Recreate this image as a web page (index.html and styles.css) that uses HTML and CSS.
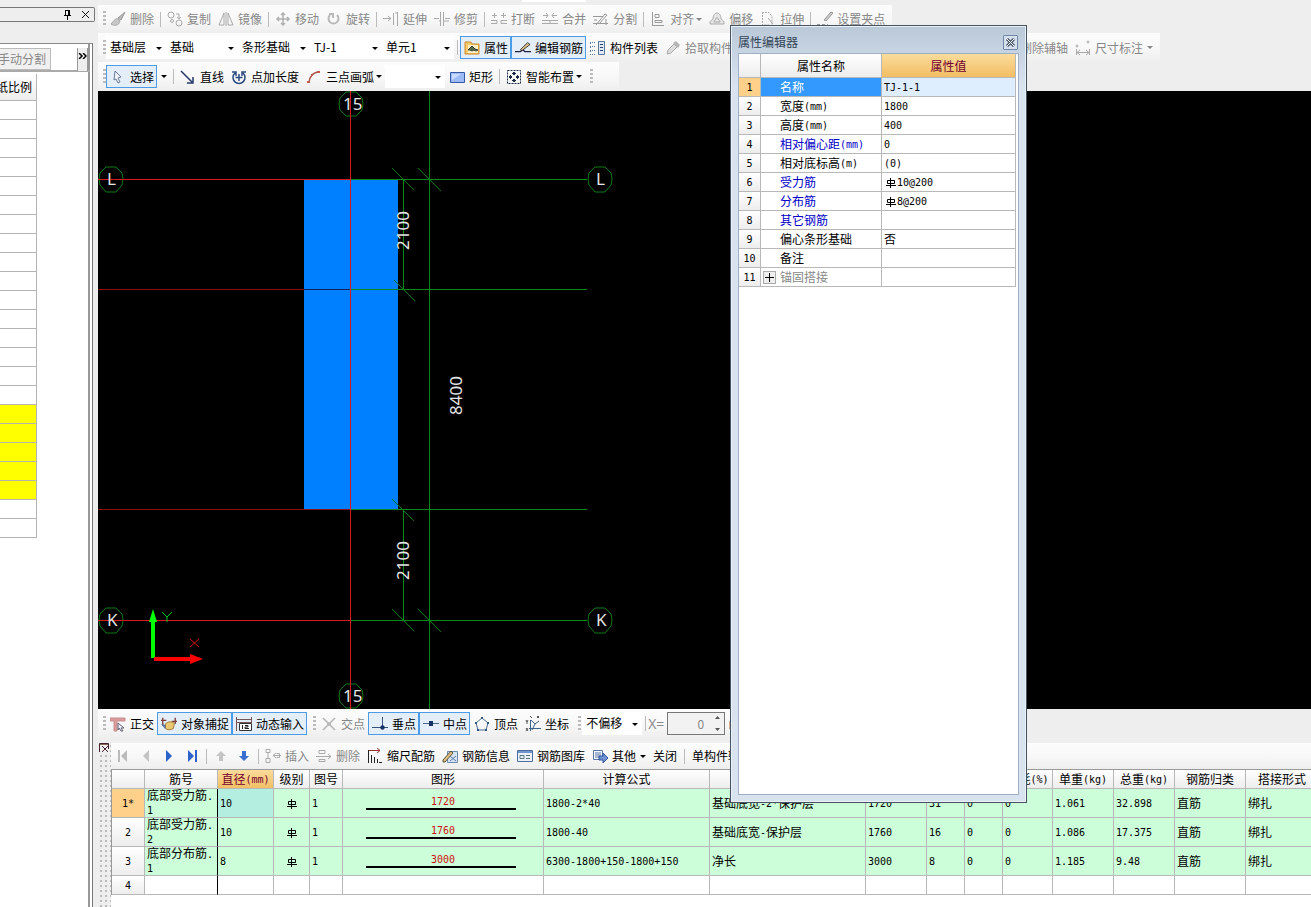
FILE: index.html
```html
<!DOCTYPE html>
<html lang="zh-CN">
<head>
<meta charset="utf-8">
<title>属性编辑器</title>
<link rel="stylesheet" href="styles.css">
</head>
<body>
<svg class="sprite" aria-hidden="true">
  <symbol id="i-brush" viewBox="0 0 16 16"><path d="M15 1 8 7l3 2z" fill="#bbb" stroke="#999"/><path d="M8 8c-3-1-4 2-7 5 3 2 8 2 9-3z" fill="#c8c8c8" stroke="#aaa"/></symbol>
  <symbol id="i-copy" viewBox="0 0 16 16" fill="none" stroke="#aaa"><circle cx="4" cy="4" r="3"/><circle cx="12" cy="12" r="3"/><circle cx="5" cy="10" r="1.5"/><path d="M9 3h3v4M10 6l2 2 2-2"/></symbol>
  <symbol id="i-mirror" viewBox="0 0 16 16" fill="none" stroke="#aaa"><path d="M6 2v12H1zM10 2v12h5zM8 1v14"/></symbol>
  <symbol id="i-move" viewBox="0 0 16 16" fill="none" stroke="#b0b0b0" stroke-width="1.5"><path d="M8 2v12M2 8h12M6 4l2-2 2 2M6 12l2 2 2-2M4 6 2 8l2 2M12 6l2 2-2 2"/></symbol>
  <symbol id="i-rotate" viewBox="0 0 16 16" fill="none" stroke="#b8b8b8" stroke-width="2"><path d="M4 4a5 5 0 1 0 7 0"/><path d="M3 3h4v4"/></symbol>
  <symbol id="i-extend" viewBox="0 0 16 16" fill="none" stroke="#aaa"><path d="M0 7.500h8M5 5l3 2.500L5 10M10.500 2v12M14.500 1v14M12 2h3"/></symbol>
  <symbol id="i-trim" viewBox="0 0 16 16" fill="none" stroke="#aaa"><path d="M0 7.500h5M11 7.500h5M6.500 1v14M9.500 1v14M5 10h1M10 10h5"/></symbol>
  <symbol id="i-break" viewBox="0 0 16 16" fill="none" stroke="#aaa"><path d="M1 4.500h5M10 4.500h5M3.500 2v5M12.500 2v5M0 9.500h6v3H0M16 9.500h-6v3h6"/></symbol>
  <symbol id="i-merge" viewBox="0 0 16 16" fill="none" stroke="#aaa"><path d="M1 4.500h5M10 4.500h5M4 2l2 2.500L4 7M12 2l-2 2.500L12 7M0 9.500h16M0 12.500h16M8 10v3"/></symbol>
  <symbol id="i-split" viewBox="0 0 16 16" fill="none" stroke="#999"><path d="M0 5.500h10M0 12.500h15M3 14l9-11 2 1-8 9M1 9h3M13 8v6"/></symbol>
  <symbol id="i-align" viewBox="0 0 16 16" fill="none" stroke="#999"><path d="M2.500 1v14M2 14.500h12M5 3.500h4v3H5zM5 9.500h7v2H5z"/></symbol>
  <symbol id="i-offset" viewBox="0 0 16 16" fill="#e6e6e6" stroke="#aaa"><path d="M1 13c0-4 1-3 3-5 0-8 8-8 8 0 2 2 3 1 3 5z"/><path d="M5 11c0-2 1-1 2-3 0-2 2-2 2 0 1 2 2 1 2 3z"/></symbol>
  <symbol id="i-stretch" viewBox="0 0 16 16" fill="none" stroke="#aaa"><path d="M2 1.500h7l3 4v9M2.500 1v13H9" stroke-dasharray="2 1"/><path d="m8 7 5 6"/></symbol>
  <symbol id="i-grip" viewBox="0 0 16 16" fill="none" stroke="#999"><path d="m14 1-7 8 2 1 7-8z" fill="#ccc"/><path d="M0 13.500h11" stroke-dasharray="3 2"/></symbol>
  <symbol id="i-props" viewBox="0 0 16 16"><path d="M1 2h6l1 2h7v10H1z" fill="#f7c96a" stroke="#c8862a"/><path d="M4 5h10v8H4z" fill="#fff1c4"/><path d="m4 10 4-4 3 3 3 1-2 1-2-1-2 1-2-1z" fill="#5a6a48" stroke="#34443a"/></symbol>
  <symbol id="i-pen" viewBox="0 0 18 16"><path d="M0 12h6l3-2 2 2h7" fill="none" stroke="#224" stroke-width="1.500"/><path d="m6 10 8-8 3 2-9 7z" fill="#d7b98a" stroke="#333"/></symbol>
  <symbol id="i-list" viewBox="0 0 16 16" fill="none" stroke="#58759b"><path d="M2 2.500h4M2 6.500h4M2 10.500h4M2 14.500h4" stroke-dasharray="1 1"/><path d="M.500 2v13" stroke-dasharray="2 2"/><path d="M8.500 1.500h6v13h-6z" fill="#dfe9f6"/><path d="M10 4.500h3M10 7.500h3M10 10.500h3" stroke="#2c476f"/></symbol>
  <symbol id="i-dropper" viewBox="0 0 16 16"><path d="m2 14 1-4 6-6 3 3-6 6z" fill="#ddd" stroke="#aaa"/><path d="m8 3 3-2 4 4-2 3z" fill="#b5b5b5"/></symbol>
  <symbol id="i-dim" viewBox="0 0 16 16" fill="none" stroke="#aaa"><path d="M1.500 9v6M14.500 9v6M2 12.500h12M5 10l-3 2.500L5 15M11 10l3 2.500L11 15"/><circle cx="13" cy="2" r="1"/><circle cx="2" cy="6" r="1"/></symbol>
  <symbol id="i-select" viewBox="0 0 16 16"><path d="m5 2 6 6-3 1 2 4-2 1-2-4-2 1z" fill="#eef3fa" stroke="#6a7a9a"/></symbol>
  <symbol id="i-line" viewBox="0 0 16 16" fill="none" stroke="#25396b" stroke-width="1.500"><path d="m1 2 11 11M13 8v6H7"/></symbol>
  <symbol id="i-pluslen" viewBox="0 0 16 16" fill="none" stroke="#2b4a80" stroke-width="1.500"><path d="M4 4a6 6 0 1 0 8 0M1 3h4v4M8 5v7M4.500 8.500h7M15 3h-4v4"/></symbol>
  <symbol id="i-arc" viewBox="0 0 16 16"><path d="M3 14C3 8 7 3 13 3" fill="none" stroke="#a5504a" stroke-width="1.500"/><path d="M1 12h3v2H1zM11 2h3v2h-3zM5 5h2v2H5z" fill="#c25a50"/></symbol>
  <symbol id="i-rect" viewBox="0 0 16 16"><path d="M1.500 3.500h14v10h-14z" fill="#9dbcf6" stroke="#3659a8"/><path d="M3 5h9L3 11z" fill="#c9dbff"/></symbol>
  <symbol id="i-smart" viewBox="0 0 16 16" fill="none" stroke="#1c2a44"><path d="M1.500 1.500h13v13h-13z" stroke-dasharray="2 1"/><path d="M8 3v3M8 10v3M3 8h3M10 8h3" stroke-width="2"/><path d="m6 5 2-2 2 2M6 11l2 2 2-2M5 6 3 8l2 2M11 6l2 2-2 2"/></symbol>
  <symbol id="i-ortho" viewBox="0 0 16 16"><path d="M0 2h15v3H7v10H4V5H0z" fill="#dc9a9a" stroke="#c89090"/><path d="m8 7 6 5h-3l2 3h-2l-2-3-1 2z" fill="#eef" stroke="#667"/></symbol>
  <symbol id="i-snap" viewBox="0 0 18 16"><path d="M2 1v9M0 4h6M16 1v7M12 5h6" stroke="#7d3b36" stroke-width="1.500" fill="none"/><path d="M5 8c2-3 8-3 10-1l-1 6c-3 2-7 2-9 0z" fill="#ecc873" stroke="#96702c"/><path d="m0 8 5 1v5z" fill="#58739b"/></symbol>
  <symbol id="i-dyn" viewBox="0 0 16 16"><path d="M.500 1v14M15.500 1v6M1 3.500h14M1 6.500h14" stroke="#755" fill="none"/><path d="M3.500 7.500h12v7h-12z" fill="#fff" stroke="#333"/><path d="M6.500 9v4M9 9.500h3v1.500H9v1.500h4" stroke="#222" fill="none"/></symbol>
  <symbol id="i-cross" viewBox="0 0 16 16"><path d="M2 2l12 12M14 2 2 14" stroke="#b5b5b5" stroke-width="1.500"/><path d="M6 6h4v4H6z" fill="#bbb"/></symbol>
  <symbol id="i-perp" viewBox="0 0 16 16"><path d="M0 11.500h16M10.500 1v11" stroke="#36527e"/><circle cx="10.500" cy="11.500" r="2.200" fill="#153266"/></symbol>
  <symbol id="i-mid" viewBox="0 0 16 16"><path d="M0 7.500h16" stroke="#49688e"/><path d="M6 5h4v5H6z" fill="#153266"/></symbol>
  <symbol id="i-penta" viewBox="0 0 16 16"><path d="m8 2 6 5-2 7H4L2 7z" fill="none" stroke="#4a6c91"/><path d="M7 1h2v2H7zM1 6h2v2H1zM13 6h2v2h-2zM3 13h2v2H3zM11 13h2v2h-2z" fill="#305680"/></symbol>
  <symbol id="i-coord" viewBox="0 0 16 16" fill="none" stroke="#3c638c"><path d="M5.500 4v11M4 12.500h12M6 4l4 4 4-3M10 8l-3 6"/><path d="M1 4l1 2 1-2M2 6v2M1 12l2 3M3 12l-2 3M5 0l2 2M12 0l2 2M14 0l-2 2" stroke="#555"/></symbol>
  <symbol id="i-insert" viewBox="0 0 16 16" fill="none" stroke="#aaa"><path d="M1 1.500h4v3H1zM1 10.500h4v4H1zM3 5v5M16 7.500H8M11 5 8 7.500 11 10M11.500 5.500h3v4h-3"/></symbol>
  <symbol id="i-remove" viewBox="0 0 16 16" fill="none" stroke="#aaa"><path d="M3 2.500h6v3H3zM3 11.500h6v2H3zM0 8.500h15M12 6l3 2.500L12 11"/></symbol>
  <symbol id="i-scale" viewBox="0 0 16 16" fill="none" stroke="#222"><path d="M1.500 2v13M4.500 7v8M7.500 9v6M10.500 11v4M12 14.500h3"/><path d="M2 2.500h11M10 0l3 2.500L10 5" stroke="#9b3333"/></symbol>
  <symbol id="i-info" viewBox="0 0 16 16"><path d="M5.500 3.500h10v11h-10z" fill="#d7e4f5" stroke="#6d89ad"/><path d="m1 12 8-9 2 2-8 9H1z" fill="#e4bd84" stroke="#553"/><path d="m8 13 6-5M8 8l6 5" stroke="#577aa8"/></symbol>
  <symbol id="i-lib" viewBox="0 0 16 16"><path d="M.500 2.500h15v11H.500z" fill="#eaf1fb" stroke="#4c6d9d"/><path d="M1 3h14v2H1z" fill="#6f95ca"/><path d="M3 7.500h4v3H3zM9 7.500h4M9 10.500h4" fill="none" stroke="#577"/></symbol>
  <symbol id="i-other" viewBox="0 0 16 16"><path d="M1.500 2.500h9v9h-9z" fill="#f3f7ff" stroke="#5877a4"/><path d="M3 5h6M3 7h6M3 9h4" stroke="#5877a4"/><path d="M7 8h4V5l5 5-5 5v-3H7z" fill="#6f92d2" stroke="#34569c"/></symbol>
  <symbol id="i-rebar" viewBox="0 0 10 10"><path d="M1.500 2.500h7v3h-7zM4.500 0v10M0 7.500h10" fill="none" stroke="#000"/></symbol>
</svg>

<div class="app">
  <aside class="side">
    <header class="side-title">
      <svg width="9" height="11" viewBox="0 0 9 11" fill="none" stroke="#000"><path d="M2.500 1v5M1 6.500h7M4.500 7v4M2 1.500h4"/><path d="M6 1v5" stroke-width="2"/></svg>
      <svg width="9" height="9" viewBox="0 0 9 9" stroke="#111"><path d="m1 1 7 7M8 1 1 8"/></svg>
    </header>
    <div class="side-body">
      <div class="side-tools"><button class="split" type="button">手动分割</button><button class="more" type="button" aria-label="更多"><svg width="9" height="6" viewBox="0 0 9 6" fill="none" stroke="#000" stroke-width="1.500"><path d="m1 0 3 3-3 3M5 0l3 3-3 3"/></svg></button></div>
      <table class="scale-table">
        <thead><tr><th><span>图纸比例</span></th></tr></thead>
        <tbody>
          <tr><td></td></tr><tr><td></td></tr><tr><td></td></tr><tr><td></td></tr><tr><td></td></tr><tr><td></td></tr><tr><td></td></tr><tr><td></td></tr>
          <tr><td></td></tr><tr><td></td></tr><tr><td></td></tr><tr><td></td></tr><tr><td></td></tr><tr><td></td></tr><tr><td></td></tr><tr><td></td></tr>
          <tr class="hot"><td></td></tr><tr class="hot"><td></td></tr><tr class="hot"><td></td></tr><tr class="hot"><td></td></tr><tr class="hot"><td></td></tr>
          <tr><td></td></tr><tr><td></td></tr>
        </tbody>
      </table>
    </div>
  </aside>

  <main class="main">
    <div class="bars">
      <div class="top-edge"></div>
      <div class="bar off">
        <i class="grip"></i>
        <button class="tool" type="button"><svg><use href="#i-brush"/></svg>删除</button><i class="sep"></i>
        <button class="tool" type="button"><svg><use href="#i-copy"/></svg>复制</button>
        <button class="tool" type="button"><svg><use href="#i-mirror"/></svg>镜像</button><i class="sep"></i>
        <button class="tool" type="button"><svg><use href="#i-move"/></svg>移动</button>
        <button class="tool" type="button"><svg><use href="#i-rotate"/></svg>旋转</button><i class="sep"></i>
        <button class="tool" type="button"><svg><use href="#i-extend"/></svg>延伸</button>
        <button class="tool" type="button"><svg><use href="#i-trim"/></svg>修剪</button><i class="sep"></i>
        <button class="tool" type="button"><svg><use href="#i-break"/></svg>打断</button>
        <button class="tool" type="button"><svg><use href="#i-merge"/></svg>合并</button>
        <button class="tool" type="button"><svg><use href="#i-split"/></svg>分割</button><i class="sep"></i>
        <button class="tool" type="button"><svg><use href="#i-align"/></svg>对齐<i class="arrow"></i></button>
        <button class="tool" type="button"><svg><use href="#i-offset"/></svg>偏移</button>
        <button class="tool" type="button"><svg><use href="#i-stretch"/></svg>拉伸</button><i class="sep"></i>
        <button class="tool" type="button"><svg><use href="#i-grip"/></svg>设置夹点</button>
      </div>
      <div class="bar">
        <i class="grip"></i>
        <span class="combo short"><select aria-label="楼层"><option>基础层</option></select></span>
        <span class="combo"><select aria-label="构件类别"><option>基础</option></select></span>
        <span class="combo"><select aria-label="构件类型"><option>条形基础</option></select></span>
        <span class="combo"><select aria-label="构件"><option>TJ-1</option></select></span>
        <span class="combo"><select aria-label="单元"><option>单元1</option></select></span><i class="sep"></i>
        <button class="tool on" type="button"><svg><use href="#i-props"/></svg>属性</button>
        <button class="tool on" type="button"><svg><use href="#i-pen"/></svg>编辑钢筋</button>
        <button class="tool" type="button"><svg><use href="#i-list"/></svg>构件列表</button>
        <button class="tool dim" type="button"><svg><use href="#i-dropper"/></svg>拾取构件</button>
        <span class="axis-tools">
          <button class="tool dim" type="button"><svg><use href="#i-line"/></svg>删除辅轴</button>
          <button class="tool dim" type="button"><svg><use href="#i-dim"/></svg>尺寸标注<i class="arrow far"></i></button>
        </span>
      </div>
      <div class="bar">
        <i class="grip"></i>
        <button class="tool on" type="button"><svg><use href="#i-select"/></svg>选择</button><button class="drop" type="button" aria-label="选择方式"><i class="arrow"></i></button><i class="sep"></i>
        <button class="tool" type="button"><svg><use href="#i-line"/></svg>直线</button>
        <button class="tool" type="button"><svg><use href="#i-pluslen"/></svg>点加长度</button>
        <button class="tool" type="button"><svg><use href="#i-arc"/></svg>三点画弧<i class="arrow"></i></button>
        <span class="combo short"><select aria-label="弧半径"><option></option></select></span>
        <button class="tool" type="button"><svg><use href="#i-rect"/></svg>矩形</button><i class="sep"></i>
        <button class="tool" type="button"><svg><use href="#i-smart"/></svg>智能布置<i class="arrow"></i></button>
        <i class="grip"></i><i class="tail"></i>
      </div>
    </div>

    <div class="canvas">
      <svg class="drawing" role="img" aria-label="条形基础平面图">
        <g transform="translate(-98 -91)">
          <path class="blue" d="M304 180h94v329h-94z"/>
          <g class="green">
            <path d="M350 179.500h237M350 289.500h237M350 509.500h237M350 620.500h237M429.500 91v618M403.500 180v110M403.500 510v110"/>
            <path class="thin" d="m392 168 22 22M418 168l23 23M394 280l21 21M392 499l22 22M392 609l22 22M418 609l23 23"/>
            <path class="thin" d="M346 92h10l6 6 1 6-1 6-6 6h-10l-6-6-1-6 1-6zM346 684h10l6 6 1 6-1 6-6 6h-10l-6-6-1-6 1-6z"/>
            <path class="thin" d="M106 167h10l6 6 1 6-1 6-6 7h-10l-6-7-1-6 1-6zM595 167h10l6 6 1 6-1 6-6 7h-10l-6-7-1-6 1-6zM106 608h10l6 6 1 6-1 6-6 7h-10l-6-7-1-6 1-6zM595 608h10l6 6 1 6-1 6-6 7h-10l-6-7-1-6 1-6z"/>
          </g>
          <path class="maroon" d="M98 289.500h206M98 509.500h252"/>
          <path class="navy" d="M304 289.500h46"/>
          <path class="red" d="M98 179.500h252M98 620.500h252M350.500 91v618"/>
          <g class="mark">
            <text x="343" y="110">15</text><text x="343" y="702">15</text>
            <text x="107" y="185">L</text><text x="596" y="185">L</text><text x="107" y="626">K</text><text x="596" y="626">K</text>
            <text transform="translate(409 250) rotate(-90)">2100</text>
            <text transform="translate(409 580) rotate(-90)">2100</text>
            <text transform="translate(462 415) rotate(-90)">8400</text>
          </g>
          <path d="M151 658V622h-2l4-13 4 13h-2v36z" fill="#0f0"/>
          <path d="M154 657h36v-3l13 5-13 5v-3h-36z" fill="red"/>
          <path d="m162 612 5 5 5-5M167 617v5" fill="none" stroke="#0c2"/>
          <path d="m190 639 9 8M199 639l-9 8" stroke="#d11"/>
        </g>
      </svg>
    </div>

    <div class="status">
      <div class="bar">
        <i class="grip"></i>
        <button class="tool" type="button"><svg><use href="#i-ortho"/></svg>正交</button>
        <button class="tool on" type="button"><svg><use href="#i-snap"/></svg>对象捕捉</button>
        <button class="tool on" type="button"><svg><use href="#i-dyn"/></svg>动态输入</button>
        <i class="grip mid"></i>
        <button class="tool dim" type="button"><svg><use href="#i-cross"/></svg>交点</button>
        <button class="tool on" type="button"><svg><use href="#i-perp"/></svg>垂点</button>
        <button class="tool on" type="button"><svg><use href="#i-mid"/></svg>中点</button>
        <button class="tool" type="button"><svg><use href="#i-penta"/></svg>顶点</button>
        <button class="tool" type="button"><svg><use href="#i-coord"/></svg>坐标</button>
        <i class="grip mid"></i>
        <span class="combo short"><select aria-label="偏移方式"><option>不偏移</option></select></span><i class="sep"></i>
        <label class="coord" for="dx">X=</label><span class="spin"><input id="dx" type="text" value="0"><svg width="7" height="15" viewBox="0 0 7 15" fill="#555"><path d="m1 3 2.500-3L6 3zM1 12h5l-2.500 3z"/></svg></span><span class="coord">mm</span>
      </div>
    </div>

    <section class="rebar">
      <div class="gutter"><button class="shut" type="button" aria-label="关闭面板"><svg width="10" height="10" viewBox="0 0 10 10" fill="none" stroke="#423"><path d="M.500 9V.500H9.500V6M3 3l6 6M9 3 3 9"/><path d="M1 1.500h8" stroke="#865"/></svg></button></div>
      <div class="rebar-body">
        <div class="bar">
          <button class="nav" type="button" aria-label="首条"><svg viewBox="0 0 12 12" fill="#bbb"><path d="M1 0h2v12H1zM10 0v12L4 6z"/></svg></button>
          <button class="nav" type="button" aria-label="上一条"><svg viewBox="0 0 12 12" fill="#c4c4c4"><path d="M9 0v12L3 6z"/></svg></button>
          <button class="nav" type="button" aria-label="下一条"><svg viewBox="0 0 12 12" fill="#2d62c8"><path d="M3 0v12l6-6z"/></svg></button>
          <button class="nav" type="button" aria-label="末条"><svg viewBox="0 0 12 12" fill="#2d62c8"><path d="M2 0v12l6-6zM9 0h2v12H9z"/></svg></button><i class="sep"></i>
          <button class="nav" type="button" aria-label="上移"><svg viewBox="0 0 12 12" fill="#c4c4c4"><path d="M6 1 1 6h3v5h4V6h3z"/></svg></button>
          <button class="nav" type="button" aria-label="下移"><svg viewBox="0 0 12 12" fill="#3b6ed0"><path d="M6 11 1 6h3V1h4v5h3z"/></svg></button><i class="sep"></i>
          <button class="tool dim" type="button"><svg><use href="#i-insert"/></svg>插入</button>
          <button class="tool dim" type="button"><svg><use href="#i-remove"/></svg>删除</button>
          <button class="tool" type="button"><svg><use href="#i-scale"/></svg>缩尺配筋</button>
          <button class="tool" type="button"><svg><use href="#i-info"/></svg>钢筋信息</button>
          <button class="tool" type="button"><svg><use href="#i-lib"/></svg>钢筋图库</button>
          <button class="tool" type="button"><svg><use href="#i-other"/></svg>其他<i class="arrow far"></i></button>
          <button class="tool" type="button">关闭</button><i class="sep wide"></i>
          <button class="tool" type="button">单构件输入</button>
        </div>
        <div class="grid-wrap">
        <table class="grid">
          <colgroup><col class="w33"><col class="w73"><col class="w56"><col class="w36"><col class="w33"><col class="w201"><col class="w166"><col class="w156"><col class="w61"><col class="w38"><col class="w38"><col class="w50"><col class="w61"><col class="w61"><col class="w71"><col class="w73"></colgroup>
          <thead><tr><th></th><th>筋号</th><th class="act">直径<b>(mm)</b></th><th>级别</th><th>图号</th><th>图形</th><th>计算公式</th><th>公式描述</th><th>长度<b>(mm)</b></th><th>根数</th><th>搭接</th><th>损耗<b>(%)</b></th><th>单重<b>(kg)</b></th><th>总重<b>(kg)</b></th><th>钢筋归类</th><th>搭接形式</th></tr></thead>
          <tbody>
            <tr><th class="cur"><b>1*</b></th><td class="name">底部受力筋<b>.<br>1</b></td><td class="sel"><b>10</b></td><td class="mid"><svg class="bar-sym"><use href="#i-rebar"/></svg></td><td><b>1</b></td><td><span class="shape">1720</span></td><td><b>1800-2*40</b></td><td>基础底宽<b>-2*</b>保护层</td><td><b>1720</b></td><td><b>31</b></td><td><b>0</b></td><td><b>0</b></td><td><b>1.061</b></td><td><b>32.898</b></td><td>直筋</td><td>绑扎</td></tr>
            <tr><th><b>2</b></th><td class="name">底部受力筋<b>.<br>2</b></td><td><b>10</b></td><td class="mid"><svg class="bar-sym"><use href="#i-rebar"/></svg></td><td><b>1</b></td><td><span class="shape">1760</span></td><td><b>1800-40</b></td><td>基础底宽<b>-</b>保护层</td><td><b>1760</b></td><td><b>16</b></td><td><b>0</b></td><td><b>0</b></td><td><b>1.086</b></td><td><b>17.375</b></td><td>直筋</td><td>绑扎</td></tr>
            <tr><th><b>3</b></th><td class="name">底部分布筋<b>.<br>1</b></td><td><b>8</b></td><td class="mid"><svg class="bar-sym"><use href="#i-rebar"/></svg></td><td><b>1</b></td><td><span class="shape">3000</span></td><td><b>6300-1800+150-1800+150</b></td><td>净长</td><td><b>3000</b></td><td><b>8</b></td><td><b>0</b></td><td><b>0</b></td><td><b>1.185</b></td><td><b>9.48</b></td><td>直筋</td><td>绑扎</td></tr>
            <tr class="blank"><th><b>4</b></th><td class="name"></td><td></td><td></td><td></td><td></td><td></td><td></td><td></td><td></td><td></td><td></td><td></td><td></td><td></td><td></td></tr>
          </tbody>
        </table>
        </div>
      </div>
    </section>
  </main>

  <section class="dialog" role="dialog" aria-labelledby="dlg-title">
    <header class="dialog-head"><span id="dlg-title">属性编辑器</span><button class="close" type="button" aria-label="关闭"><svg width="9" height="9" viewBox="0 0 9 9"><path d="m1 1 7 7M8 1 1 8" stroke="#456" stroke-width="3"/><path d="m1 1 7 7M8 1 1 8" stroke="#fff"/></svg></button></header>
    <div class="dialog-body">
      <table class="props">
        <colgroup><col class="w22"><col class="w121"><col></colgroup>
        <thead><tr><th></th><th>属性名称</th><th class="act">属性值</th></tr></thead>
        <tbody>
          <tr class="picked"><th><b>1</b></th><td>名称</td><td><b>TJ-1-1</b></td></tr>
          <tr><th><b>2</b></th><td>宽度<b>(mm)</b></td><td><b>1800</b></td></tr>
          <tr><th><b>3</b></th><td>高度<b>(mm)</b></td><td><b>400</b></td></tr>
          <tr class="key"><th><b>4</b></th><td>相对偏心距<b>(mm)</b></td><td><b>0</b></td></tr>
          <tr><th><b>5</b></th><td>相对底标高<b>(m)</b></td><td><b>(0)</b></td></tr>
          <tr class="key"><th><b>6</b></th><td>受力筋</td><td><svg class="bar-sym"><use href="#i-rebar"/></svg><b>10@200</b></td></tr>
          <tr class="key"><th><b>7</b></th><td>分布筋</td><td><svg class="bar-sym"><use href="#i-rebar"/></svg><b>8@200</b></td></tr>
          <tr class="key"><th><b>8</b></th><td>其它钢筋</td><td></td></tr>
          <tr><th><b>9</b></th><td>偏心条形基础</td><td>否</td></tr>
          <tr><th><b>10</b></th><td>备注</td><td></td></tr>
          <tr class="group"><th><b>11</b></th><td><button class="expand" type="button" aria-label="展开"><svg width="9" height="9" viewBox="0 0 9 9"><path d="M0 4.500h9M4.500 0v9" stroke="#000"/></svg></button>锚固搭接</td><td></td></tr>
        </tbody>
      </table>
    </div>
  </section>
</div>
</body>
</html>
```
FILE: styles.css
```css
* { box-sizing: border-box; }
body { margin: 0; background: #eee; color: #000; font: 12px/16px "Noto Sans CJK SC", sans-serif; }
button, input, select { font: inherit; color: inherit; margin: 0; }
button { padding: 0; border: 0; background: none; }
b { font: 10px/12px "DejaVu Sans Mono", monospace; vertical-align: 1px; }
table { border-collapse: separate; border-spacing: 0; table-layout: fixed; }
.sprite { position: absolute; width: 0; height: 0; }

.app { position: relative; display: flex; height: 100vh; overflow: hidden; }

/* left panel */
.side { flex: none; width: 95px; padding-top: 7px; display: flex; flex-direction: column; }
.side-title { display: flex; align-items: center; justify-content: flex-end; gap: 9px; height: 15px; padding-right: 4px; border: 1px solid #777; border-left: 0; border-radius: 0 2px 2px 0; }
.side-body { flex: 1; width: 93px; margin-top: 21px; background: #fff; border-top: 1px solid #888; border-right: 1px solid #777; box-shadow: inset -2px 0 #fff, inset -4px 0 #999; }
.side-tools { display: flex; align-items: center; justify-content: space-between; height: 28px; padding: 4px 2px 0 0; margin-right: 2px; border-bottom: 2px solid #aaa; }
.split { display: flex; justify-content: flex-end; align-items: center; width: 51px; height: 22px; padding-right: 4px; overflow: hidden; white-space: nowrap; color: #888; background: #f0f0f0; border: 1px solid #bbb; border-left: 0; }
.more { display: flex; align-items: flex-start; justify-content: center; width: 11px; height: 23px; padding-top: 5px; background: #eee; border: 1px solid #999; border-width: 0 1px; }
.scale-table { width: 37px; margin-top: 2px; }
.scale-table th, .scale-table td { height: 19px; padding: 0; border-right: 1px solid #b4b4b4; border-bottom: 1px solid #b4b4b4; }
.scale-table th { height: 27px; background: linear-gradient(#fff, #eee); font-weight: normal; }
.scale-table span { display: flex; justify-content: flex-end; padding-right: 4px; overflow: hidden; white-space: nowrap; }
.scale-table .hot td { background: #ff0; }

/* toolbars */
.main { flex: 1; min-width: 0; display: flex; flex-direction: column; padding-left: 3px; }
.bars { display: flex; flex-direction: column; align-items: flex-start; overflow: hidden; }
.top-edge { width: 64px; height: 2px; margin: 0 0 3px 424px; background: #fff; }
.bar { display: flex; align-items: center; height: 29px; background: linear-gradient(#fcfcfc, #f8f8f8 50%, #eee); white-space: nowrap; }
.bars .bar { padding-right: 4px; }
.bars .off { height: 28px; }
.off, .dim { color: #888; }
.grip { flex: none; width: 3px; height: 16px; margin-left: 5px; background: repeating-linear-gradient(#bbb 0 2px, transparent 2px 4px); }
.mid.grip { margin: 0 1px 0 6px; }
.sep { flex: none; width: 1px; height: 15px; margin: 0 2px 0 3px; background: #bbb; }
.sep.wide { margin: 0 3px 0 4px; }
.tool { flex: none; display: flex; align-items: center; gap: 4px; height: 23px; padding: 0 3px 0 4px; }
.tool svg { width: 16px; height: 16px; }
.tool.on { padding: 0 2px 0 3px; border: 1px solid #4a9be8; background: #e4eef9; }
.arrow { width: 0; margin: 0 0 0 -2px; border: 3px solid transparent; border-top-color: currentColor; border-bottom: 0; }
.arrow.far { margin-left: 0; }
.drop { display: flex; align-items: center; justify-content: center; width: 13px; height: 23px; padding-left: 2px; }
.tail { width: 22px; }
.combo { position: relative; flex: none; width: 72px; height: 23px; background: #fff; }
.combo.short { width: 60px; }
.combo::after { content: ""; position: absolute; right: 4px; top: 11px; border: 3px solid transparent; border-top-color: #000; border-bottom: 0; pointer-events: none; }
.combo select { appearance: none; display: block; width: 100%; height: 22px; padding: 0 10px 0 4px; border: 0; background: none; }
.axis-tools { display: flex; padding-left: 260px; }

/* drawing area */
.canvas { flex: 1; min-height: 0; background: #000; overflow: hidden; }
.drawing { display: block; width: 100%; height: 100%; }
.blue { fill: #007fff; }
.green { fill: none; stroke: #078a18; }
.green .thin { stroke: #0b7a16; }
.maroon { stroke: #8c1010; }
.navy { stroke: #102060; }
.red { stroke: #d81820; }
.mark { fill: #e4e4e4; font: 17px "Noto Sans", sans-serif; }

.status { flex: none; display: flex; height: 34px; }
.coord { color: #888; font: 14px/16px "Open Sans", sans-serif; }
.spin { flex: none; display: flex; align-items: center; width: 58px; height: 23px; margin: 0 3px; padding-right: 3px; border: 1px solid #777; background: #f2f2f2; }
.spin input { flex: 1; min-width: 0; padding: 0 10px 0 0; border: 0; background: none; color: #888; text-align: right; }

/* rebar list */
.rebar { flex: none; display: flex; height: 164px; overflow: hidden; background: #fff; }
.gutter { flex: none; width: 13px; background: radial-gradient(circle at 1px 1px, #bbb 1px, transparent 1px) 2px 2px / 5px 5px, #eee; }
.shut { display: flex; padding: 0 1px; background: #eee; }
.rebar-body { flex: 1; min-width: 0; }
.rebar .bar { height: 26px; }
.nav { flex: none; display: flex; justify-content: center; width: 23px; }
.nav svg { width: 12px; height: 12px; }
.grid-wrap { overflow: hidden; border: 1px solid #999; border-width: 1px 0 0 1px; }
.grid { width: 1207px; }
.grid th, .grid td, .props th, .props td { padding: 0; border-right: 1px solid #b8b8b8; border-bottom: 1px solid #b8b8b8; font-weight: normal; line-height: 14px; white-space: nowrap; overflow: hidden; }
.grid th, .props th { background: linear-gradient(#fff, #ededed); text-align: center; }
.grid td { height: 29px; padding-left: 2px; background: #ccffd9; }
.grid thead th { height: 19px; }
.grid .name { line-height: 12px; border-right-color: #000; }
.grid .name b { vertical-align: baseline; }
.grid .mid { text-align: center; padding: 0; }
.grid .blank td { height: 19px; background: #fff; }
.grid .sel { background: #b3eee0; }
.grid .cur { background: #ffd08a; }
.grid .act, .props .act { background: linear-gradient(#fbdc9c, #f2be64); color: #700030; }
.shape { display: block; width: 150px; margin-left: 21px; padding-left: 4px; border-bottom: 2px solid #000; color: #d01010; font: 10px/12px "DejaVu Sans Mono", monospace; text-align: center; }
.bar-sym { width: 10px; height: 10px; vertical-align: -1px; }
.w22 { width: 22px; } .w33 { width: 33px; } .w36 { width: 36px; } .w38 { width: 38px; } .w50 { width: 50px; }
.w56 { width: 56px; } .w61 { width: 61px; } .w71 { width: 71px; } .w73 { width: 73px; } .w121 { width: 121px; }
.w156 { width: 156px; } .w166 { width: 166px; } .w201 { width: 201px; }

/* floating property window */
.dialog { position: absolute; left: 730px; top: 25px; width: 297px; height: 778px; display: flex; flex-direction: column; padding: 0 7px 7px; border: 1px solid #45525f; background: linear-gradient(#b9c8d8, #d9e3f0 60px); box-shadow: inset 0 0 0 1px #eaf1f8; }
.dialog-head { display: flex; align-items: center; justify-content: space-between; height: 27px; padding: 5px 1px 0 0; color: #345; }
.close { display: flex; align-items: center; justify-content: center; width: 15px; height: 15px; border: 1px solid #7088a8; border-radius: 1px; background: #d5e0ec; }
.dialog-body { flex: 1; background: #fff; border: 1px solid #a0b0c4; overflow: hidden; }
.props { width: 277px; }
.props thead th { height: 24px; }
.props td, .props tbody th { height: 19px; }
.props td { padding-left: 2px; }
.props td:nth-child(2) { position: relative; padding-left: 19px; }
.props td .bar-sym { margin-left: 2px; margin-right: 1px; }
.key td:nth-child(2) { color: #0000c8; }
.group td { color: #888; }
.picked th { background: #ffd08a; }
.props .picked th { background: #ffd08a; }
.picked td { background: #dfeeff; }
.props .picked td:nth-child(2) { background: #3399ff; color: #fff; }
.expand { position: absolute; left: 2px; top: 3px; display: flex; align-items: center; justify-content: center; width: 13px; height: 13px; border: 1px solid #aaa; background: #eee; }
```
